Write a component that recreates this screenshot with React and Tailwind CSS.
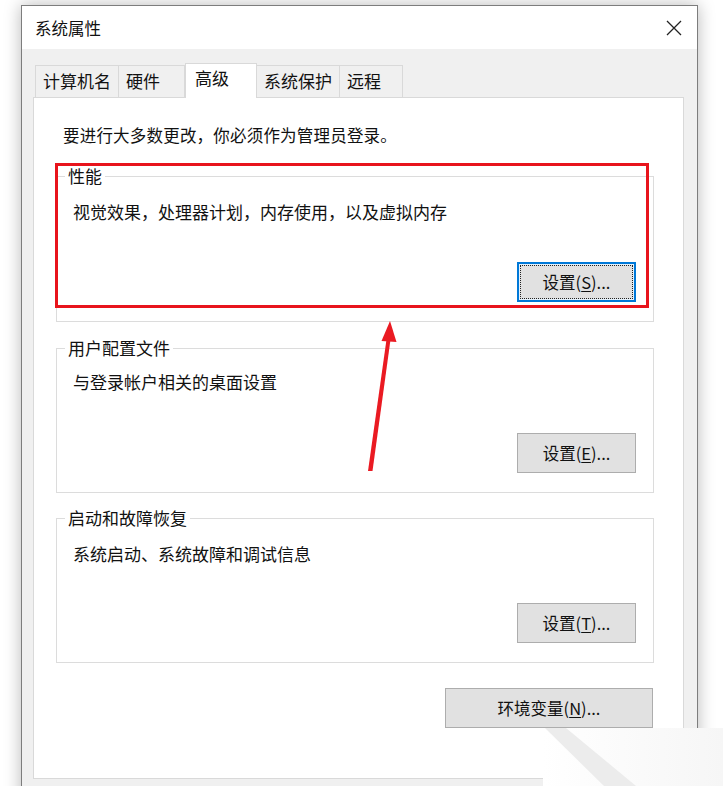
import React from "react";

const FONT = { fontFamily: '"Microsoft YaHei", "Noto Sans CJK SC", "Noto Sans", sans-serif' };

function Btn({ label, k, w = "w-[119px]", focused = false }) {
  const text = (
    <>
      {label}(<span className="underline underline-offset-2">{k}</span>)...
    </>
  );
  if (focused) {
    return (
      <div className={`${w} h-[40px] bg-[#e5f1fb] border-2 border-[#0078d7] p-[1px] flex`}>
        <div className="flex-1 border border-dotted border-[#222] bg-[#e1e1e1] flex items-center justify-center text-[16.5px] leading-[22px] text-[#111]">
          {text}
        </div>
      </div>
    );
  }
  return (
    <div className={`${w} h-[40px] bg-[#e1e1e1] border border-[#adadad] flex items-center justify-center text-[16.5px] leading-[22px] text-[#111]`}>
      {text}
    </div>
  );
}

function Group({ title, desc, btn, h, descPt = "pt-[24px]" }) {
  return (
    <div className={`relative border border-[#dcdcdc] ${h} flex flex-col`}>
      <span className="absolute left-[8px] top-[-12px] bg-white px-[3px] text-[17px] leading-[22px] text-[#111]">
        {title}
      </span>
      <div className={`pl-[16px] ${descPt} text-[17px] leading-[22px] text-[#111]`}>{desc}</div>
      <div className="flex-1" />
      <div className="flex justify-end pr-[17px] pb-[19px]">{btn}</div>
    </div>
  );
}

function Tab({ label, w, selected = false, first = false }) {
  if (selected) {
    return (
      <div
        className={`${w} h-[35px] -mb-px relative z-10 bg-white border-t border-l border-r border-[#d9d9d9] pl-[9px] pt-[3px] text-[17px] leading-[22px] text-[#111]`}
      >
        {label}
      </div>
    );
  }
  return (
    <div
      className={`${w} h-[32px] bg-[#f0f0f0] border-t border-r ${first ? "border-l" : ""} border-[#d9d9d9] pl-[7px] pt-[4px] text-[17px] leading-[22px] text-[#111]`}
    >
      {label}
    </div>
  );
}

export default function App() {
  return (
    <div className="relative w-[723px] h-[786px] overflow-hidden bg-white pt-[5px] pl-[21px]" style={FONT}>
      {/* window */}
      <div className="w-[677px] h-[800px] border border-[#7d7d7d] bg-[#f0f0f0] shadow-[0_0_16px_rgba(0,0,0,0.28)] flex flex-col">
        {/* title bar */}
        <div className="h-[43px] bg-white flex items-center justify-between pl-[13px] pr-[12px]">
          <span className="text-[16.5px] leading-[22px] text-[#111]">系统属性</span>
          <svg width="18" height="18" viewBox="0 0 18 18" className="mr-[2px]">
            <path d="M2 2 L16 16 M16 2 L2 16" stroke="#222" strokeWidth="1.3" fill="none" />
          </svg>
        </div>
        {/* body */}
        <div className="flex-1 pl-[11px] pt-[14px]">
          <div className="flex items-end h-[34px] ml-[2px]">
            <Tab label="计算机名" w="w-[84px]" first />
            <Tab label="硬件" w="w-[66px]" />
            <Tab label="高级" w="w-[72px]" selected />
            <Tab label="系统保护" w="w-[83px]" />
            <Tab label="远程" w="w-[63px]" />
          </div>
          <div className="w-[651px] h-[682px] bg-white border border-[#d9d9d9] flex flex-col">
            <div className="pl-[29px] pt-[26px] text-[16.5px] tracking-[0.2px] leading-[22px] text-[#111]">
              要进行大多数更改，你必须作为管理员登录。
            </div>
            <div className="pl-[22px] pt-[30px] w-[620px] flex flex-col">
              <Group
                h="h-[146px]"
                title="性能"
                desc="视觉效果，处理器计划，内存使用，以及虚拟内存"
                btn={<Btn label="设置" k="S" focused />}
              />
              <div className="mt-[26px]">
                <Group
                  h="h-[145px]"
                  title="用户配置文件"
                  descPt="pt-[22px]"
                  desc="与登录帐户相关的桌面设置"
                  btn={<Btn label="设置" k="E" />}
                />
              </div>
              <div className="mt-[25px]">
                <Group
                  h="h-[145px]"
                  title="启动和故障恢复"
                  desc="系统启动、系统故障和调试信息"
                  btn={<Btn label="设置" k="T" />}
                />
              </div>
              <div className="mt-[25px] flex justify-end pr-[1px]">
                <Btn label="环境变量" k="N" w="w-[208px]" />
              </div>
            </div>
          </div>
        </div>
      </div>

      {/* red highlight rectangle */}
      <div className="absolute left-[55px] top-[163px] w-[594px] h-[145px] border-[3px] border-[#e8141c] pointer-events-none" />

      {/* red arrow + watermark corner */}
      <svg className="absolute left-0 top-0 pointer-events-none" width="723" height="786" viewBox="0 0 723 786">
        <polygon points="368,471 372.5,471 391,336 387,336" fill="#ea1a22" />
        <polygon points="390,321 381.5,341 396.5,342" fill="#ea1a22" />
        <defs>
          <linearGradient id="wm" x1="0" y1="0" x2="1" y2="0">
            <stop offset="0" stopColor="#ffffff" />
            <stop offset="1" stopColor="#f6f6f6" />
          </linearGradient>
        </defs>
        <rect x="543" y="728" width="180" height="58" fill="url(#wm)" />
        <polygon points="545,728 566,728 636,786 604,786" fill="#ececec" />
      </svg>
    </div>
  );
}
